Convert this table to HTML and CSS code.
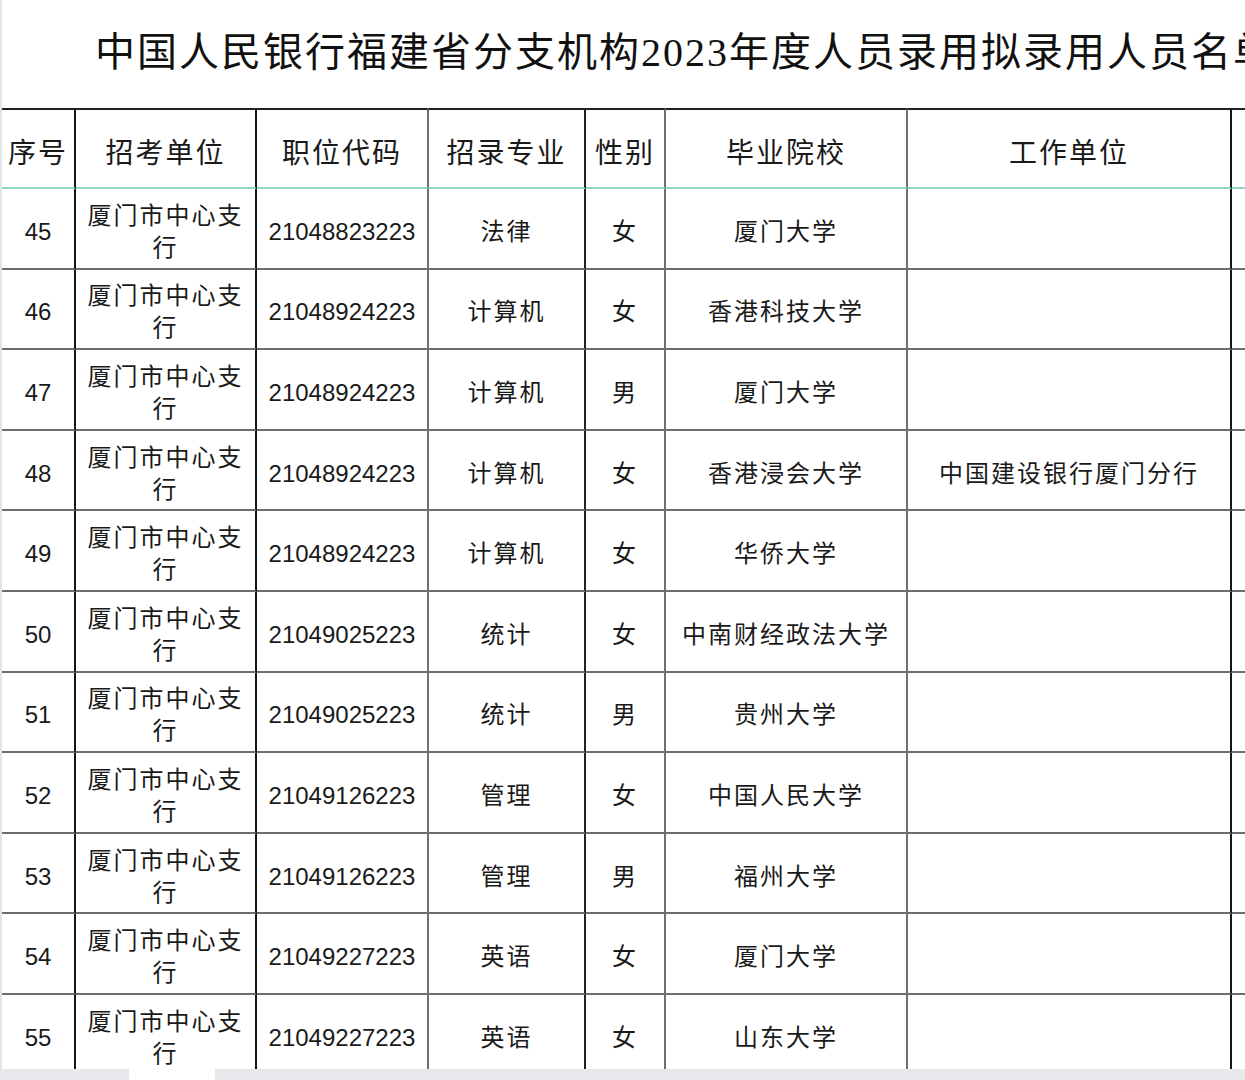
FILE: index.html
```html
<!DOCTYPE html>
<html lang="zh-CN">
<head>
<meta charset="utf-8">
<title>中国人民银行福建省分支机构2023年度人员录用拟录用人员名单</title>
<link rel="stylesheet" href="styles.css">
</head>
<body>
<div class="page">
  <div class="sheet">
    <h1 class="title">中国人民银行福建省分支机构2023年度人员录用拟录用人员名单</h1>
    <table class="grid">
      <colgroup>
        <col class="c-no"><col class="c-unit"><col class="c-code"><col class="c-major"><col class="c-sex"><col class="c-school"><col class="c-work"><col class="c-extra">
      </colgroup>
      <thead>
        <tr>
          <th class="v1">序号</th>
          <th class="v2">招考单位</th>
          <th class="v3">职位代码</th>
          <th class="v4">招录专业</th>
          <th class="v5">性别</th>
          <th class="v6">毕业院校</th>
          <th class="v7">工作单位</th>
          <th class="v8"></th>
        </tr>
      </thead>
      <tbody>
        <tr><td class="v1">45</td><td class="v2 cjk">厦门市中心支行</td><td class="v3">21048823223</td><td class="v4 cjk">法律</td><td class="v5 cjk">女</td><td class="v6 cjk">厦门大学</td><td class="v7 cjk"></td><td class="v8"></td></tr>
        <tr><td class="v1">46</td><td class="v2 cjk">厦门市中心支行</td><td class="v3">21048924223</td><td class="v4 cjk">计算机</td><td class="v5 cjk">女</td><td class="v6 cjk">香港科技大学</td><td class="v7 cjk"></td><td class="v8"></td></tr>
        <tr><td class="v1">47</td><td class="v2 cjk">厦门市中心支行</td><td class="v3">21048924223</td><td class="v4 cjk">计算机</td><td class="v5 cjk">男</td><td class="v6 cjk">厦门大学</td><td class="v7 cjk"></td><td class="v8"></td></tr>
        <tr><td class="v1">48</td><td class="v2 cjk">厦门市中心支行</td><td class="v3">21048924223</td><td class="v4 cjk">计算机</td><td class="v5 cjk">女</td><td class="v6 cjk">香港浸会大学</td><td class="v7 cjk">中国建设银行厦门分行</td><td class="v8"></td></tr>
        <tr><td class="v1">49</td><td class="v2 cjk">厦门市中心支行</td><td class="v3">21048924223</td><td class="v4 cjk">计算机</td><td class="v5 cjk">女</td><td class="v6 cjk">华侨大学</td><td class="v7 cjk"></td><td class="v8"></td></tr>
        <tr><td class="v1">50</td><td class="v2 cjk">厦门市中心支行</td><td class="v3">21049025223</td><td class="v4 cjk">统计</td><td class="v5 cjk">女</td><td class="v6 cjk">中南财经政法大学</td><td class="v7 cjk"></td><td class="v8"></td></tr>
        <tr><td class="v1">51</td><td class="v2 cjk">厦门市中心支行</td><td class="v3">21049025223</td><td class="v4 cjk">统计</td><td class="v5 cjk">男</td><td class="v6 cjk">贵州大学</td><td class="v7 cjk"></td><td class="v8"></td></tr>
        <tr><td class="v1">52</td><td class="v2 cjk">厦门市中心支行</td><td class="v3">21049126223</td><td class="v4 cjk">管理</td><td class="v5 cjk">女</td><td class="v6 cjk">中国人民大学</td><td class="v7 cjk"></td><td class="v8"></td></tr>
        <tr><td class="v1">53</td><td class="v2 cjk">厦门市中心支行</td><td class="v3">21049126223</td><td class="v4 cjk">管理</td><td class="v5 cjk">男</td><td class="v6 cjk">福州大学</td><td class="v7 cjk"></td><td class="v8"></td></tr>
        <tr><td class="v1">54</td><td class="v2 cjk">厦门市中心支行</td><td class="v3">21049227223</td><td class="v4 cjk">英语</td><td class="v5 cjk">女</td><td class="v6 cjk">厦门大学</td><td class="v7 cjk"></td><td class="v8"></td></tr>
        <tr><td class="v1">55</td><td class="v2 cjk">厦门市中心支行</td><td class="v3">21049227223</td><td class="v4 cjk">英语</td><td class="v5 cjk">女</td><td class="v6 cjk">山东大学</td><td class="v7 cjk"></td><td class="v8"></td></tr>
      </tbody>
    </table>
  </div>
  <div class="tabbar">
    <div class="tab tab-gray tab-first"></div>
    <div class="tab tab-active"></div>
    <div class="tab tab-gray tab-rest"></div>
  </div>
</div>
</body>
</html>
```
FILE: styles.css
```css
html, body {
  margin: 0;
  padding: 0;
  height: 1080px;
  overflow: hidden;
  background: #ffffff;
}

.page {
  display: flex;
  flex-direction: column;
  height: 1080px;
  width: 1245px;
  overflow: hidden;
}

.sheet {
  flex: 1;
  min-height: 0;
  overflow: hidden;
  border-left: 2px solid #e3e4e6;
}

.title {
  margin: 0;
  height: 108px;
  line-height: 106px;
  padding-left: 93px;
  font-family: "Liberation Serif", "Noto Sans CJK SC", serif;
  font-weight: normal;
  font-size: 40px;
  letter-spacing: 2px;
  color: #111111;
  white-space: nowrap;
  overflow: hidden;
}

.grid {
  table-layout: fixed;
  border-collapse: separate;
  border-spacing: 0;
  width: 1330px;
  font-family: "Liberation Sans", "Noto Sans CJK SC", sans-serif;
  color: #1a1a1a;
}

.c-no { width: 74px; }
.c-unit { width: 181px; }
.c-code { width: 172px; }
.c-major { width: 157px; }
.c-sex { width: 80px; }
.c-school { width: 242px; }
.c-work { width: 324px; }
.c-extra { width: 100px; }

.grid th,
.grid td {
  box-sizing: border-box;
  text-align: center;
  vertical-align: middle;
  padding: 0 2px;
  border-right: 2px solid #7a7a7a;
}

.grid th {
  height: 81px;
  font-size: 28px;
  font-weight: normal;
  letter-spacing: 2px;
  border-top: 2px solid #222222;
  border-bottom: 2px solid #8fd8bd;
  padding-top: 4px;
}

.grid td {
  height: 80.6px;
  font-size: 24px;
  line-height: 32px;
  border-bottom: 2px solid #6e6e6e;
  padding-top: 7px;
}

.grid td.cjk {
  letter-spacing: 2px;
}

.grid .v1 { border-right-color: #151515; padding-left: 0; padding-right: 0; }
.grid .v2 { border-right-color: #151515; }
.grid .v3 { border-right-color: #6f6f6f; }
.grid .v4 { border-right-color: #222222; }
.grid .v5 { border-right-color: #6f6f6f; }
.grid .v6 { border-right-color: #6f6f6f; }
.grid .v7 { border-right-color: #151515; }
.grid .v8 { border-right: none; }

.tabbar {
  display: flex;
  height: 11px;
  flex: 0 0 11px;
}

.tab-gray {
  background: #e6e8ec;
}

.tab-first {
  width: 129px;
}

.tab-active {
  width: 86px;
  background: #ffffff;
}

.tab-rest {
  flex: 1;
}
```
